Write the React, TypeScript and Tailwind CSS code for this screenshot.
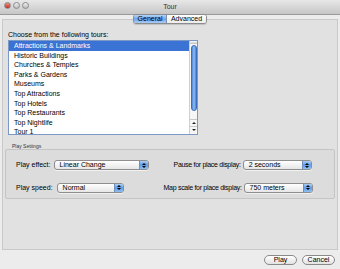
const tours = [
  "Attractions & Landmarks",
  "Historic Buildings",
  "Churches & Temples",
  "Parks & Gardens",
  "Museums",
  "Top Attractions",
  "Top Hotels",
  "Top Restaurants",
  "Top Nightlife",
  "Tour 1",
];

function PopUp({ value, width }: { value: string; width: string }) {
  return (
    <div
      className={`${width} h-[10px] flex items-stretch rounded-[3px] border border-[#8e8e8e] overflow-hidden bg-gradient-to-b from-white to-[#e6e6e6] shadow-[0_1px_0_rgba(255,255,255,0.6)]`}
    >
      <div className="flex-1 pl-[5px] text-[7px] leading-[8px] text-black whitespace-nowrap">{value}</div>
      <div className="w-[9px] flex flex-col items-center justify-center gap-[1px] bg-gradient-to-b from-[#a9cdf4] via-[#5c9be6] to-[#8ec0f3] border-l border-[#6f8fbf]">
        <div className="w-0 h-0 border-l-[2px] border-r-[2px] border-b-[2px] border-l-transparent border-r-transparent border-b-black" />
        <div className="w-0 h-0 border-l-[2px] border-r-[2px] border-t-[2px] border-l-transparent border-r-transparent border-t-black" />
      </div>
    </div>
  );
}

function Light({ color }: { color: string }) {
  return <div className={`w-[7px] h-[7px] rounded-full border border-[#8a8a8a] ${color}`} />;
}

export default function App() {
  return (
    <div
      className="w-[340px] h-[269px] overflow-hidden bg-[#ececec] flex flex-col text-black"
      style={{ fontFamily: '"Liberation Sans", Arial, sans-serif' }}
    >
      {/* Title bar */}
      <div className="h-[15px] relative flex items-center justify-center bg-gradient-to-b from-[#e8e8e8] to-[#c6c6c6] border-b border-[#9a9a9a]">
        <div className="absolute left-[4px] top-[2px] flex gap-[2px]">
          <Light color="bg-gradient-to-b from-[#f08a80] to-[#c8251c]" />
          <Light color="bg-gradient-to-b from-[#eeeeee] to-[#bdbdbd]" />
          <Light color="bg-gradient-to-b from-[#eeeeee] to-[#bdbdbd]" />
        </div>
        <span className="text-[7px] text-[#333]">Tour</span>
      </div>

      {/* Tabs */}
      <div className="flex justify-center mt-[-1px] relative z-10">
        <div className="flex h-[10px] rounded-[3px] border border-[#8c8c8c] overflow-hidden text-[7px] leading-[8px] shadow-[0_1px_1px_rgba(0,0,0,0.15)]">
          <div className="w-[33px] text-center bg-gradient-to-b from-[#b7d5f6] via-[#6ea6e8] to-[#a8cdf4] border-r border-[#7f8fa8]">
            General
          </div>
          <div className="w-[39px] text-center bg-gradient-to-b from-white to-[#ececec]">Advanced</div>
        </div>
      </div>

      {/* Tab panel */}
      <div className="mx-[2px] mt-[-5px] h-[231px] bg-[#e1e1e1] border border-[#c9c9c9] flex flex-col pt-[10px]">
        <div className="pl-[5px] text-[7px] leading-[9px]">Choose from the following tours:</div>
        <div className="ml-[5px] mt-[1px] w-[190px] h-[95px] border border-[#7c98c6] bg-white flex overflow-hidden">
          <div className="flex-1 flex flex-col">
            {tours.map((t, i) => (
              <div
                key={t}
                className={`h-[9.6px] shrink-0 pl-[5px] text-[7px] leading-[9.6px] ${
                  i === 0 ? "bg-[#3a73d4] text-white" : "text-black"
                }`}
              >
                {t}
              </div>
            ))}
          </div>
          {/* scrollbar */}
          <div className="w-[8px] border-l border-[#cfcfcf] bg-[#f6f6f6] flex flex-col items-center">
            <div className="w-[7px] h-[3px] bg-gradient-to-b from-white to-[#bdbdbd]" />
            <div className="w-[6px] h-[66px] mt-[1px] rounded-full bg-gradient-to-r from-[#4b86da] via-[#8fbdf1] to-[#4b86da] border border-[#3a6cbf]" />
            <div className="flex-1" />
            <div className="w-[7px] h-[7px] flex items-center justify-center border-t border-[#c8c8c8]">
              <div className="w-0 h-0 border-l-[2px] border-r-[2px] border-b-[2px] border-l-transparent border-r-transparent border-b-[#222]" />
            </div>
            <div className="w-[7px] h-[7px] mb-[1px] flex items-center justify-center border-t border-[#c8c8c8]">
              <div className="w-0 h-0 border-l-[2px] border-r-[2px] border-t-[2px] border-l-transparent border-r-transparent border-t-[#222]" />
            </div>
          </div>
        </div>

        {/* Play Settings */}
        <div className="pl-[9px] mt-[8px] text-[5px] leading-[7px] text-[#333]">Play Settings</div>
        <div className="mx-[2px] mt-[-1px] h-[50px] rounded-[2px] border border-[#c4c4c4] bg-[#dcdcdc] flex flex-col pt-[10px] gap-[12px] text-[7px]">
          <div className="flex items-center">
            <span className="ml-[10px] mr-[3px] whitespace-nowrap">Play effect:</span>
            <PopUp value="Linear Change" width="w-[95px]" />
            <span className="ml-[25px] mr-[2px] whitespace-nowrap tracking-[-0.3px]">Pause for place display:</span>
            <PopUp value="2 seconds" width="w-[69px]" />
          </div>
          <div className="flex items-center">
            <span className="ml-[10px] mr-[4px] whitespace-nowrap">Play speed:</span>
            <PopUp value="Normal" width="w-[67px]" />
            <span className="ml-[40px] mr-[2px] whitespace-nowrap tracking-[-0.3px]">Map scale for place display:</span>
            <PopUp value="750 meters" width="w-[69px]" />
          </div>
        </div>
      </div>

      {/* Buttons */}
      <div className="flex-1 flex items-center justify-end gap-[5px] pr-[5px]">
        <button className="w-[33px] h-[10px] rounded-full border border-[#8a8a8a] bg-gradient-to-b from-white to-[#e2e2e2] text-[7px] leading-[8px]">
          Play
        </button>
        <button className="w-[33px] h-[10px] rounded-full border border-[#8a8a8a] bg-gradient-to-b from-white to-[#e2e2e2] text-[7px] leading-[8px]">
          Cancel
        </button>
      </div>
    </div>
  );
}
